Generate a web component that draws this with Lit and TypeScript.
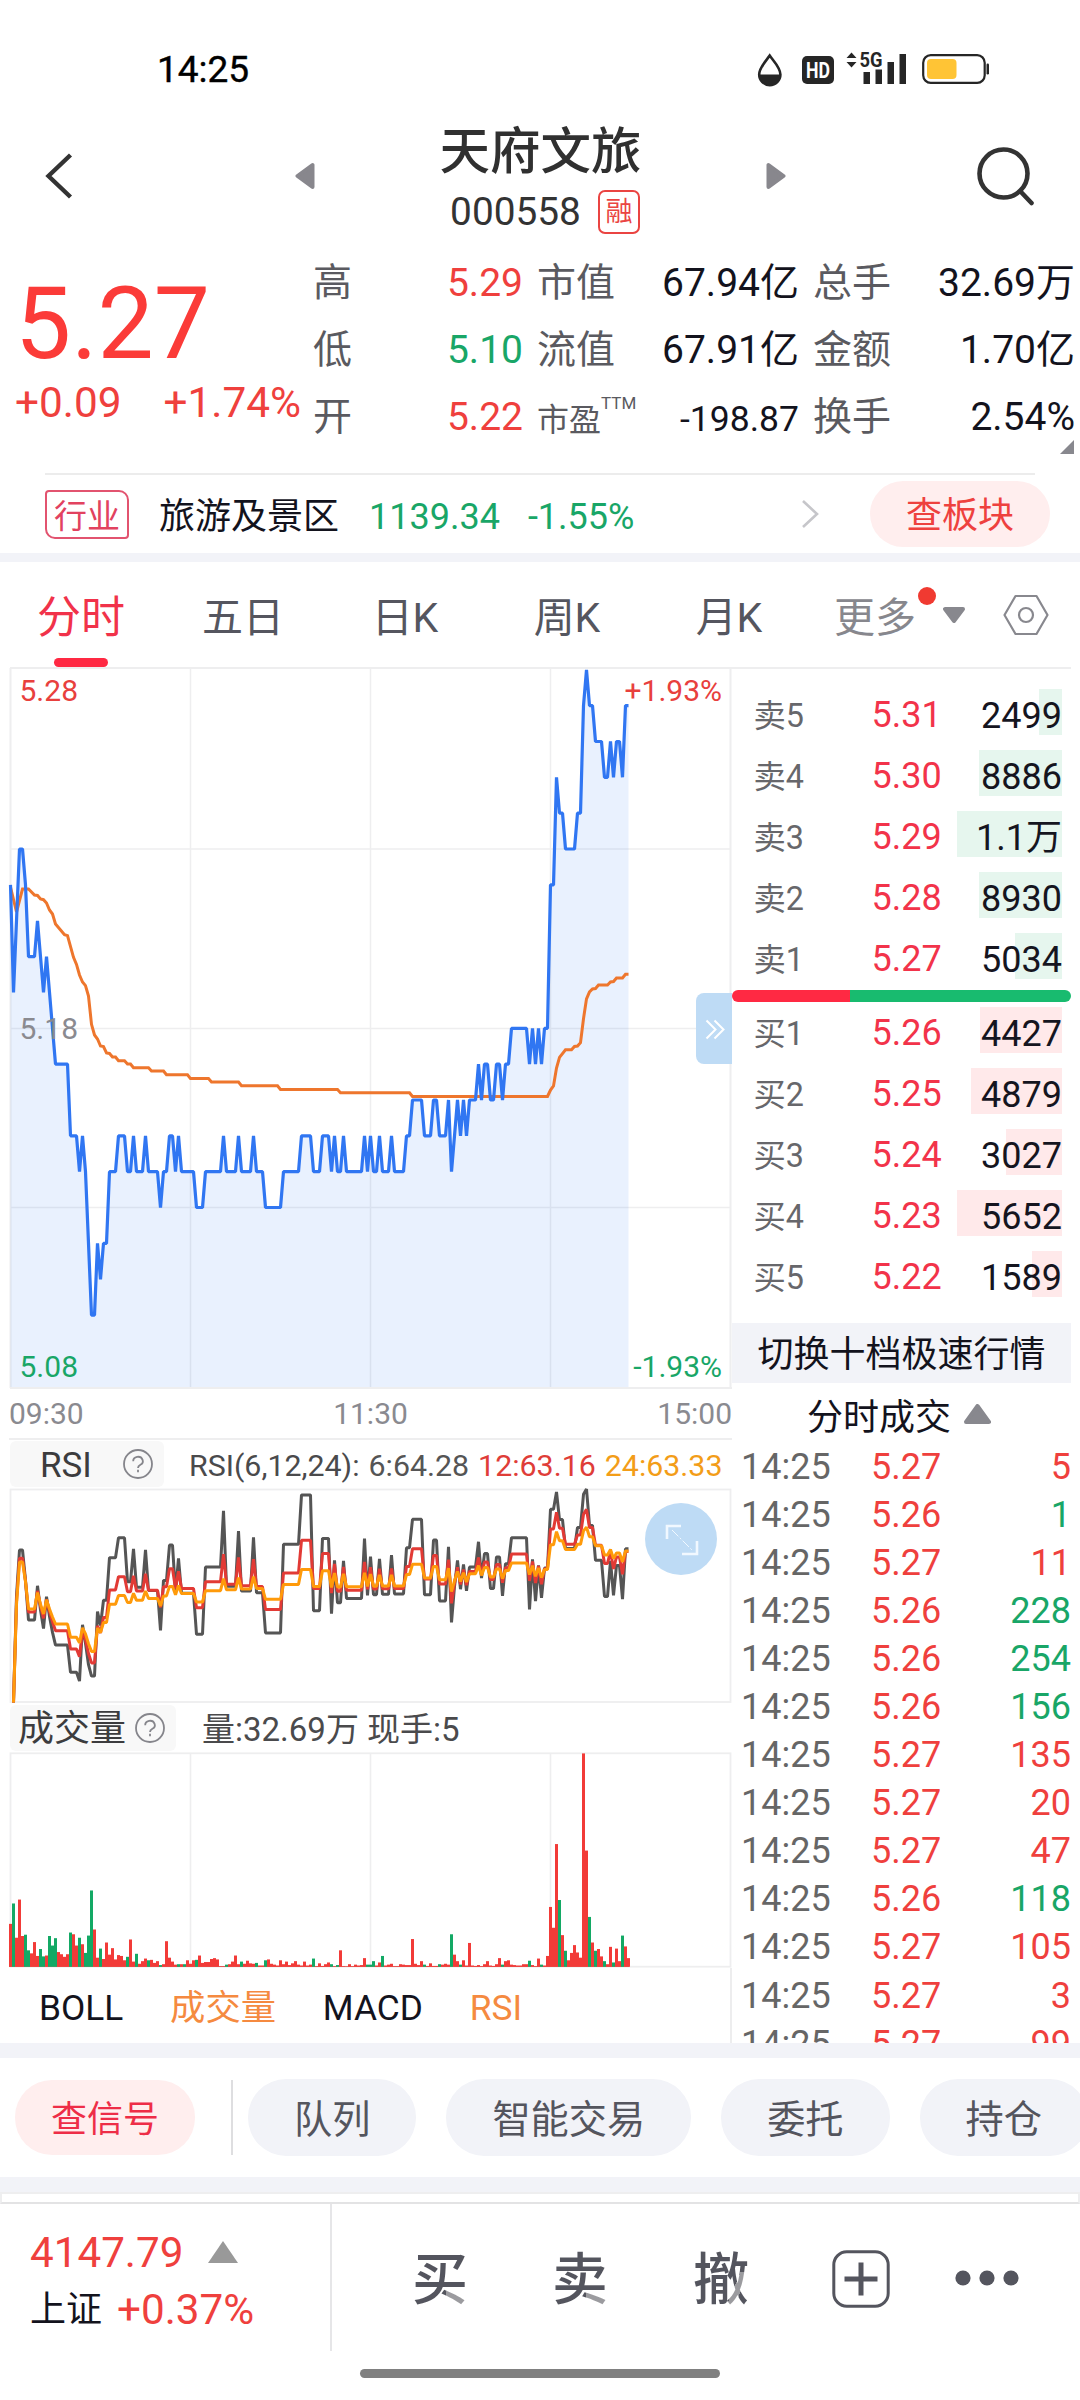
import { LitElement, html, svg, css } from "lit";
import { customElement, property } from "lit/decorators.js";
import { classMap } from "lit/directives/class-map.js";

const FONT = css`Roboto, "Noto Sans CJK SC", sans-serif`;

/* Minute prices as [ticks from previous close, minutes held]. */
const PRICE_RUNS: [number, number][] = [
  [4, 1], [1, 1], [3, 1], [5, 2], [4, 1], [2, 3], [3, 1], [2, 1], [1, 1], [2, 1], [1, 1], [0, 1], [-1, 5],
  [-3, 3], [-4, 1], [-3, 1], [-4, 1], [-6, 1], [-8, 2], [-6, 1], [-7, 1], [-6, 2], [-4, 3], [-3, 3], [-4, 2],
  [-3, 1], [-4, 3], [-3, 1], [-4, 4], [-5, 1], [-4, 2], [-3, 2], [-4, 1], [-3, 1], [-4, 5], [-5, 3], [-4, 6],
  [-3, 1], [-4, 4], [-3, 1], [-4, 4], [-3, 1], [-4, 3], [-5, 6], [-4, 6], [-3, 4], [-4, 3], [-3, 3], [-4, 1],
  [-3, 1], [-4, 2], [-3, 1], [-4, 6], [-3, 1], [-4, 1], [-3, 1], [-4, 2], [-3, 1], [-4, 3], [-3, 1], [-4, 4],
  [-3, 2], [-2, 4], [-3, 3], [-2, 2], [-3, 3], [-2, 1], [-4, 1], [-3, 1], [-2, 1], [-3, 1], [-2, 1], [-3, 1],
  [-2, 3], [-1, 1], [-2, 1], [-1, 2], [-2, 2], [-1, 2], [-2, 1], [-1, 2], [0, 6], [-1, 1], [0, 1], [-1, 1],
  [0, 1], [-1, 1], [0, 2], [4, 2], [7, 1], [6, 2], [5, 4], [6, 2], [9, 1], [10, 1], [9, 2], [8, 3], [7, 2],
  [8, 1], [7, 1], [8, 2], [7, 1], [9, 2],
];
const PRICES = PRICE_RUNS.flatMap(([v, n]) => Array<number>(n).fill(v));

/* Average price line as [minute, y]. */
const AVERAGE: [number, number][] = [
  [0, 887], [2, 912], [4, 889], [6, 889], [8, 895], [9, 895.5], [10, 899], [11, 899.7], [12, 903], [13, 910],
  [14, 914], [15, 924], [18, 934.6], [19, 935.6], [21, 957.3], [22, 964.4], [23, 975], [24, 982], [25, 985.6],
  [26, 996], [27, 1024.3], [28, 1035], [29, 1039], [30, 1046], [31, 1046.5], [32, 1053], [33, 1053.5],
  [34, 1057], [35, 1057], [36, 1060.7], [38, 1060.7], [39, 1064], [40, 1064], [41, 1067.7], [46, 1067.7],
  [47, 1071], [51, 1071], [52, 1074.8], [59, 1074.8], [60, 1078.6], [66, 1078.6], [67, 1082], [76, 1082],
  [77, 1085.7], [89, 1085.7], [90, 1089.4], [109, 1089.4], [110, 1092.7], [133, 1092.7], [134, 1096.5],
  [179, 1096.5], [180, 1090], [181, 1086], [182, 1068], [183, 1057.4], [185, 1049.8], [187, 1049.8],
  [188, 1046.5], [189, 1046], [190, 1042.7], [191, 1018.7], [192, 998.8], [193, 991.8], [194, 989],
  [195, 988.5], [196, 985], [199, 985], [200, 982], [201, 981.5], [202, 978], [204, 978], [205, 974.3],
  [206, 974.3],
];

/* Traded volume for each minute; a negative value is a falling minute. */
const VOLUMES = [
  99, -146, 67, 155, 71, -74, -38, 31, 57, 25, -41, -24, 26, -71, -49, -66, 34, 29, 23, 29,
  -79, 75, 49, -67, 52, -32, -72, -176, 86, 21, -42, 18, 56, 28, 43, 17, 27, 25, 15, -23,
  63, 12, -30, 7, 13, 19, -15, 16, 9, 13, -4, 6, 59, 21, 12, 5, -6, 6, -6, 15,
  7, 15, -16, 26, 9, 11, 11, 18, 20, 17, 1, 1, -5, 6, 12, 26, 6, -12, 7, 14,
  8, 7, -9, 3, 3, -15, 17, 7, 5, 3, 15, 6, 12, 4, 8, 13, 5, 3, 12, 3,
  5, -19, 1, 8, 2, 6, 10, -6, 1, -4, 38, 1, 0, 6, 1, 5, 3, 4, 20, -5,
  -5, -13, 3, 10, -25, 3, 5, 7, 1, 1, 6, 5, 4, 4, 64, 7, 4, 13, -5, 2,
  8, 2, 2, -6, 5, 7, 5, -75, 28, 13, -5, 15, 3, 55, 3, 2, 4, 1, 6, 13,
  3, 2, 6, 20, -5, 13, 15, 5, 4, 3, 3, 6, 6, -14, 4, 1, 19, -5, 3, 25,
  138, 90, 283, -154, 73, -37, 15, 32, 50, 33, 21, 492, 268, -115, 56, -37, 41, 24, -13, 6,
  46, -10, 42, 13, -72, 47, 20,
];

const xAt = (i: number) => 10.5 + i * 3;
const priceY = (v: number) => 1028.3 - v * 35.85;

function rsi(n: number): number[] {
  let up = 0;
  let all = 0;
  return PRICES.slice(1).map((p, i) => {
    const d = p - PRICES[i];
    up = (up * (n - 1) + Math.max(d, 0)) / n;
    all = (all * (n - 1) + Math.abs(d)) / n;
    return all ? (up / all) * 100 : 0;
  });
}

const RSI_LINES = [
  { values: rsi(6), color: "#555555" },
  { values: rsi(12), color: "#e23a35" },
  { values: rsi(24), color: "#ff9a0a" },
];
const RSI_TOP = Math.max(...RSI_LINES[0].values);

const join = (pts: [number, number][]) => pts.map(([x, y]) => `${x},${y.toFixed(1)}`).join(" ");

@customElement("help-mark")
class HelpMark extends LitElement {
  static styles = css`
    :host { display: block; width: 30px; height: 30px; }
    svg { display: block; }
  `;
  render() {
    return html`<svg width="30" height="30" viewBox="0 0 30 30" fill="none" stroke="#85858b" stroke-width="1.8">
      <circle cx="15" cy="15" r="14"></circle>
      <path d="M10.2 12.2a4.8 4.3 0 1 1 7.2 3.600c-1.8 1-2.4 1.6-2.4 3.200"></path>
      <path d="M15 20.8v2.4"></path>
    </svg>`;
  }
}

@customElement("price-chart")
class PriceChart extends LitElement {
  static styles = css`
    :host { display: block; position: relative; height: 722px; }
    svg { display: block; }
    text { font: 30px ${FONT}; }
    .more {
      position: absolute; right: 0; top: 326px; width: 36px; height: 71px;
      border-radius: 8px 0 0 8px; background: #bedbf5;
    }
  `;
  render() {
    const pts = PRICES.map((v, i) => [xAt(i), priceY(v)] as [number, number]);
    const last = xAt(PRICES.length - 1);
    return html`
      <svg width="732" height="722" viewBox="0 667 732 722">
        <g stroke="#eeeeef" stroke-width="2" fill="none">
          <path d="M10 668H732M10 1388H732M10.5 668V1388M730.5 668V1388"></path>
          <path d="M11 849H730M11 1028.5H730M11 1207.5H730M190.5 669V1388M370.5 669V1388M550.5 669V1388" stroke-width="1.5"></path>
        </g>
        <polygon points="10.5,1387 ${join(pts)} ${last},1387" fill="#2f7af5" fill-opacity=".105"></polygon>
        <polyline points=${join(AVERAGE.map(([i, y]) => [xAt(i), y]))} fill="none" stroke="#ee762d" stroke-width="3"></polyline>
        <polyline points=${join(pts)} fill="none" stroke="#3076f2" stroke-width="3.2" stroke-linejoin="bevel"></polyline>
        <text x="19.5" y="701" fill="#e8403d">5.28</text>
        <text x="19.5" y="1039" fill="#8a8a90">5.18</text>
        <text x="19.5" y="1376.5" fill="#19a667">5.08</text>
        <text x="722" y="701" text-anchor="end" fill="#e8403d">+1.93%</text>
        <text x="722" y="1376.5" text-anchor="end" fill="#19a667">-1.93%</text>
      </svg>
      <svg class="more" viewBox="0 0 36 71" fill="none" stroke="#ffffff" stroke-width="2">
        <path d="M10.5 27.5l9 9-9 9M18.5 27.5l9 9-9 9"></path>
      </svg>`;
  }
}

@customElement("rsi-chart")
class RsiChart extends LitElement {
  static styles = css`
    :host { display: block; position: relative; height: 215px; }
    svg { display: block; }
    .expand { position: absolute; left: 645px; top: 15px; }
  `;
  render() {
    return html`
      <svg width="732" height="215" viewBox="0 1488 732 215">
        <rect x="10.5" y="1489.5" width="720" height="212.5" fill="none" stroke="#eeeeef" stroke-width="1.8"></rect>
        ${RSI_LINES.map(
          (l) => svg`<polyline fill="none" stroke=${l.color} stroke-width="3" stroke-linejoin="bevel"
            points=${join(l.values.map((v, i) => [xAt(i + 1), 1702.5 - (v / RSI_TOP) * 213.5]))}></polyline>`,
        )}
      </svg>
      <svg class="expand" width="72" height="72" viewBox="0 0 72 72" fill="none" stroke="#f1f8ff" stroke-width="2.6">
        <circle cx="36" cy="36" r="36" fill="#bedbf5" stroke="none"></circle>
        <path d="M22 36V23H36M52 38V51H37"></path>
        <path d="M27 27L47 47" stroke-width="1" stroke-dasharray="9 2 2 2"></path>
      </svg>`;
  }
}

@customElement("volume-chart")
class VolumeChart extends LitElement {
  static styles = css`
    :host { display: block; height: 216px; }
    svg { display: block; }
  `;
  render() {
    return html`
      <svg width="732" height="216" viewBox="0 1752 732 216">
        <rect x="10.5" y="1753.3" width="720" height="213.4" fill="none" stroke="#eeeeef" stroke-width="1.8"></rect>
        <path d="M190.5 1753V1966M370.5 1753V1966M550.5 1753V1966" stroke="#eeeeef" stroke-width="1.6"></path>
        <path d="M9 1966.5H629" stroke="#d9706e" stroke-width="1"></path>
        ${VOLUMES.map((v, i) => {
          const h = Math.abs(v) * 0.4337;
          return svg`<rect x=${9 + i * 3} y=${1966.8 - h} width="3" height=${h} fill=${v < 0 ? "#13a965" : "#f23b38"}></rect>`;
        })}
      </svg>`;
  }
}

interface Level { name: string; price: string; qty: string; bar: number; }

@customElement("order-level")
class OrderLevel extends LitElement {
  @property({ attribute: false }) level!: Level;
  @property({ type: Boolean }) buy = false;
  static styles = css`
    :host { display: flex; height: 61px; box-sizing: border-box; padding-left: 21.5px; align-items: center; font: 36px/46px ${FONT}; }
    .name { width: 118px; padding-top: 8px; font-size: 32.3px; color: #67676b; }
    .price { padding-top: 7px; color: #f2334a; }
    .qty { position: relative; margin-left: auto; margin-right: 9px; width: 105px; height: 46px; }
    .bar { position: absolute; right: 0; top: 0; height: 46px; background: #e6f6ee; }
    .bar.buy { background: #ffe9ea; }
    .num { position: relative; padding-top: 4px; text-align: right; color: #15151f; white-space: nowrap; }
  `;
  render() {
    const l = this.level;
    return html`<span class="name">${l.name}</span><span class="price">${l.price}</span>
      <div class="qty">
        <div class=${classMap({ bar: true, buy: this.buy })} style="width:${l.bar}px"></div>
        <div class="num">${l.qty}</div>
      </div>`;
  }
}

const SELLS: Level[] = [
  { name: "卖5", price: "5.31", qty: "2499", bar: 23 },
  { name: "卖4", price: "5.30", qty: "8886", bar: 83 },
  { name: "卖3", price: "5.29", qty: "1.1万", bar: 105 },
  { name: "卖2", price: "5.28", qty: "8930", bar: 83 },
  { name: "卖1", price: "5.27", qty: "5034", bar: 47 },
];
const BUYS: Level[] = [
  { name: "买1", price: "5.26", qty: "4427", bar: 82 },
  { name: "买2", price: "5.25", qty: "4879", bar: 91 },
  { name: "买3", price: "5.24", qty: "3027", bar: 56 },
  { name: "买4", price: "5.23", qty: "5652", bar: 105 },
  { name: "买5", price: "5.22", qty: "1589", bar: 30 },
];
const TRADES: [string, number, boolean][] = [
  ["5.27", 5, true], ["5.26", 1, false], ["5.27", 11, true], ["5.26", 228, false], ["5.26", 254, false],
  ["5.26", 156, false], ["5.27", 135, true], ["5.27", 20, true], ["5.27", 47, true], ["5.26", 118, false],
  ["5.27", 105, true], ["5.27", 3, true], ["5.27", 99, true],
];

@customElement("app-root")
class AppRoot extends LitElement {
  static styles = css`
    :host { display: block; width: 1080px; height: 2400px; overflow: hidden; background: #fff; font-family: ${FONT}; color: #13131d; }
    svg { display: block; flex: none; }
    .red { color: #ef403d; }
    .green { color: #19a667; }

    .status { display: flex; align-items: center; height: 120px; box-sizing: border-box; padding: 20px 90px 0 157px; }
    .clock { flex: 1; font-size: 37px; font-weight: 400; line-height: 50px; color: #000; -webkit-text-stroke: .4px #000; }
    .status svg { overflow: visible; }
    .status svg text { font-family: ${FONT}; font-weight: 700; }

    .header { display: flex; align-items: center; height: 112px; padding: 0 44px 0 45px; }
    .prev { margin-left: 222px; }
    .names { flex: 1; height: 112px; text-align: center; }
    .title { padding-top: 2px; font-size: 50.5px; font-weight: 500; line-height: 60px; color: #303030; }
    .code { display: flex; justify-content: center; align-items: center; gap: 17px; margin-top: 8px; padding-left: 9px; font-size: 38.8px; line-height: 44px; color: #333; }
    .margin-tag { width: 38px; height: 40px; border: 2px solid #ea4442; border-radius: 7px; font-size: 27px; line-height: 41px; color: #ea4442; }
    .next { margin-right: 190px; }

    .quote { position: relative; display: flex; height: 241px; box-sizing: border-box; padding-top: 17px; }
    .now { width: 312px; box-sizing: border-box; padding: 20px 0 0 15px; }
    .last { font-size: 100px; line-height: 110px; color: #fb3b38; }
    .change { display: flex; gap: 42px; margin-top: -1px; font-size: 42.3px; line-height: 50px; }
    .stats { display: grid; grid-template-columns: 210px 262px 262px; grid-auto-rows: 67px; column-gap: 14px; padding-left: 1px; font-size: 39px; line-height: 68px; white-space: nowrap; }
    .cell { display: flex; justify-content: space-between; }
    .label { color: #5a5a60; }
    .label.pe { display: flex; font-size: 32px; padding-top: 3px; }
    .ttm { font-size: 17px; line-height: 20px; margin-top: 7px; }
    .pe-value { font-size: 35.500px; padding-top: 2px; }
    .corner { position: absolute; right: 6px; bottom: 19px; }

    .rule { height: 2px; margin: 0 45px; background: #ececec; }
    .sector { display: flex; align-items: center; height: 78px; margin: 0 30px 0 45px; font-size: 36px; line-height: 50px; }
    .sector-tag { width: 80px; height: 45px; border: 2px solid #e2536f; border-radius: 4px 10px 4px 10px; font-size: 33px; line-height: 49px; text-align: center; color: #e2425f; }
    .sector-name { margin-left: 30px; padding-top: 6px; }
    .sector-index { margin-left: 30px; padding-top: 5px; }
    .sector-pct { margin-left: 28px; padding-top: 5px; }
    .go { margin-left: auto; margin-right: 51px; }
    .pill { width: 180px; height: 66px; border-radius: 33px; background: #ffeeee; text-align: center; line-height: 71px; color: #ee413e; }
    .band { height: 9px; background: #f2f3f8; }

    .tabs { display: flex; align-items: center; height: 105px; font-size: 41px; color: #55565f; }
    .tab { width: 162px; text-align: center; line-height: 60px; padding-top: 6px; }
    .tab.on { position: relative; font-size: 44px; color: #f1324a; }
    .tab.on::after { content: ""; position: absolute; left: 54px; bottom: -19px; width: 54px; height: 9px; border-radius: 5px; background: #ff2943; }
    .more { position: relative; margin-left: 24px; padding-top: 6px; font-size: 41px; line-height: 60px; color: #87878d; }
    .dot { position: absolute; left: 84px; top: 5px; width: 18px; height: 18px; border-radius: 9px; background: #f03a31; }
    .drop { margin-left: 27px; }
    .settings { margin-left: 38px; }

    .main { display: flex; height: 1376px; overflow: hidden; }
    .left { width: 732px; }
    .axis { display: flex; justify-content: space-between; height: 49px; box-sizing: border-box; padding: 0 0 0 9px; font-size: 30px; line-height: 49px; color: #8a8a90; }
    .line { height: 2px; margin-left: 9px; background: #eeeeef; }
    .head { display: flex; align-items: center; height: 48px; padding-left: 10px; white-space: nowrap; }
    .head.vol { height: 49px; }
    .picker { display: flex; align-items: center; box-sizing: border-box; height: 46px; width: 154px; padding-left: 30px; border-radius: 6px; background: #f8f8f8; font-size: 35px; line-height: 46px; color: #3c3c3e; }
    .picker-name { padding-top: 3px; }
    .vol .picker { width: 166px; padding-left: 8px; font-size: 36px; }
    .picker help-mark { margin-left: auto; margin-right: 11px; }
    .values { display: flex; gap: 9px; margin-left: 25px; padding-top: 3px; font-size: 30.35px; line-height: 46px; color: #4a4a4c; }
    .vol .values { margin-left: 26px; padding-top: 5px; gap: 8px; font-size: 33px; }
    .gray { color: #555; }
    .crimson { color: #df3d38; }
    .amber { color: #f39d18; }
    .picks { display: flex; height: 75px; box-sizing: border-box; padding-left: 39px; border-right: 2px solid #ededee; font-size: 35.3px; line-height: 81px; }
    .pick { margin-right: 46.8px; }
    .orange { color: #f58a40; }

    .right { width: 339px; border-top: 2px solid #eeeeef; box-sizing: border-box; padding-top: 12px; }
    .ratio { height: 12px; margin: 4px 0 -3px; border-radius: 6px; background: linear-gradient(to right, #ff2943 118px, #18bb6f 118px); }
    .switch { height: 60px; margin-top: 19px; background: #f2f3f8; font-size: 36px; line-height: 65px; text-align: center; }
    .trades-head { display: flex; align-items: center; height: 59px; box-sizing: border-box; padding: 3px 0 0 75px; font-size: 36px; gap: 13px; }
    .trade { display: flex; height: 48.05px; font-size: 36px; line-height: 51px; }
    .time { width: 130px; padding-left: 9px; color: #666; }
    .amount { margin-left: auto; }

    .thick { height: 15px; background: #f2f3f8; }
    .chips { display: flex; align-items: center; height: 119px; padding-left: 15px; overflow: hidden; white-space: nowrap; }
    .signal { flex: none; width: 180px; height: 75px; border-radius: 37px; background: #ffeeee; text-align: center; font-size: 36px; line-height: 80px; color: #ee2d47; }
    .split { flex: none; width: 2px; height: 75px; margin: 0 15px 0 36px; background: #dedee0; }
    .chip { flex: none; height: 77px; padding: 0 46px; margin-right: 30px; border-radius: 38px; background: #f2f3f8; font-size: 38.2px; line-height: 83px; color: #54555e; }
    .news { height: 12px; box-sizing: border-box; border: 2px solid #eeeeef; border-bottom-color: #e3e3e4; }

    .footer { display: flex; height: 165px; }
    .index { width: 332px; height: 147px; box-sizing: border-box; padding: 21px 0 0 30px; border-right: 2px solid #e6e6e8; font-size: 42.2px; line-height: 55px; }
    .index-row { display: flex; align-items: center; gap: 25px; }
    .index-row svg { margin-top: -2px; }
    .index-row.low { gap: 15px; }
    .index-name { font-size: 36px; padding-top: 3px; }
    .actions { flex: 1; display: flex; height: 147px; }
    .act { width: 56px; height: 70px; margin-top: 41px; font-size: 56px; font-weight: 500; line-height: 70px; color: transparent; -webkit-background-clip: text; background-clip: text; background-color: #54555e; background-repeat: no-repeat; background-image: linear-gradient(#9b9b9f, #9b9b9f); background-size: 25px 16px; background-position: 34px 46px; }
    .act.buy { margin-left: 80px; }
    .act.sell { margin-left: 84px; }
    .act.cancel { margin-left: 85px; background-image: linear-gradient(113deg, transparent 38%, #9b9b9f 38%, #9b9b9f 63%, transparent 63%); background-size: 18px 36px; background-position: 35px 27px; }
    .plus { margin: 46px 0 0 83px; }
    .dots { margin: 66px 0 0 65px; }
    .home { width: 360px; height: 9px; margin: 0 auto; border-radius: 5px; background: #808080; }
  `;

  private triangle(up: boolean, color: string, w: number, h: number) {
    const d = up ? `M${w / 2} 2L${w - 2} ${h - 2}H2Z` : `M2 2H${w - 2}L${w / 2} ${h - 2}Z`;
    return html`<svg width=${w} height=${h}><path d=${d} fill=${color} stroke=${color} stroke-width="4" stroke-linejoin="round"></path></svg>`;
  }

  private cell(label: unknown, value: string, tone = "") {
    return html`<div class="cell"><span class="label">${label}</span><span class=${tone}>${value}</span></div>`;
  }

  render() {
    return html`
      <div class="status">
        <div class="clock">14:25</div>
        <svg width="236" height="40" viewBox="0 0 236 40">
          <path d="M15.7 5.6C12 11 5.2 17.5 5.2 24.6a10.6 10.6 0 0 0 21.2 0C26.4 17.5 19.4 11 15.7 5.6Z" fill="none" stroke="#262626" stroke-width="2.6"></path>
          <path d="M4.5 24.5H27A11.3 11.3 0 0 1 4.5 24.5Z" fill="#262626"></path>
          <rect x="48" y="6" width="32" height="28" rx="5" fill="#262626"></rect>
          <text x="64" y="28" font-size="22" fill="#fff" text-anchor="middle" textLength="24" lengthAdjust="spacingAndGlyphs">HD</text>
          <path d="M97.5 2.5l5 5.5h-10zM97.5 17.500l5-5.500h-10z" fill="#262626"></path>
          <text x="105.500" y="16.500" font-size="21" fill="#262626" textLength="23" lengthAdjust="spacingAndGlyphs">5G</text>
          <path d="M109.500 22h6.500v12h-6.500zM121.500 19.500h6.500V34h-6.500zM133.500 12h6.500v22h-6.500zM145.500 4h6.500v30h-6.500z" fill="#262626"></path>
          <rect x="169.200" y="5.200" width="61.500" height="27.600" rx="7.500" fill="none" stroke="#262626" stroke-width="2.200"></rect>
          <rect x="173" y="9" width="29.500" height="20" rx="4" fill="#ffc435"></rect>
          <rect x="232.500" y="13.500" width="2.500" height="11" rx="1.200" fill="#262626"></rect>
        </svg>
      </div>

      <div class="header">
        <svg width="28" height="46" viewBox="0 0 28 46" fill="none" stroke="#333" stroke-width="4.400"><path d="M25.500 2L3.500 23l22 21"></path></svg>
        <svg class="prev" width="20" height="28" viewBox="0 0 20 28"><path d="M2.500 14L17.500 3V25Z" fill="#88878d" stroke="#88878d" stroke-width="4" stroke-linejoin="round"></path></svg>
        <div class="names">
          <div class="title">天府文旅</div>
          <div class="code"><span>000558</span><span class="margin-tag">融</span></div>
        </div>
        <svg class="next" width="20" height="28" viewBox="0 0 20 28"><path d="M17.500 14L2.500 3V25Z" fill="#88878d" stroke="#88878d" stroke-width="4" stroke-linejoin="round"></path></svg>
        <svg width="60" height="60" viewBox="0 0 60 60" fill="none" stroke="#333" stroke-width="4.600" stroke-linecap="round"><circle cx="27.500" cy="27.500" r="24"></circle><path d="M45.500 46.500L55.500 57"></path></svg>
      </div>

      <div class="quote">
        <div class="now">
          <div class="last">5.27</div>
          <div class="change red"><span>+0.09</span><span>+1.74%</span></div>
        </div>
        <div class="stats">
          ${this.cell("高", "5.29", "red")}${this.cell("市值", "67.94亿")}${this.cell("总手", "32.69万")}
          ${this.cell("低", "5.10", "green")}${this.cell("流值", "67.91亿")}${this.cell("金额", "1.70亿")}
          ${this.cell("开", "5.22", "red")}
          <div class="cell"><span class="label pe">市盈<span class="ttm">TTM</span></span><span class="pe-value">-198.87</span></div>
          ${this.cell("换手", "2.54%")}
        </div>
        <svg class="corner" width="14" height="14"><path d="M14 0V14H0Z" fill="#88888e"></path></svg>
      </div>

      <div class="rule"></div>
      <div class="sector">
        <div class="sector-tag">行业</div>
        <div class="sector-name">旅游及景区</div>
        <div class="sector-index green">1139.34</div>
        <div class="sector-pct green">-1.55%</div>
        <svg class="go" width="18" height="30" viewBox="0 0 18 30" fill="none" stroke="#c6c6ca" stroke-width="2.600"><path d="M2 2l14 13L2 28"></path></svg>
        <div class="pill">查板块</div>
      </div>
      <div class="band"></div>

      <div class="tabs">
        <div class="tab on">分时</div><div class="tab">五日</div><div class="tab">日K</div><div class="tab">周K</div><div class="tab">月K</div>
        <div class="more">更多<span class="dot"></span></div>
        <div class="drop">${this.triangle(false, "#88888e", 22, 16)}</div>
        <svg class="settings" width="46" height="42" viewBox="0 0 46 42" fill="none" stroke="#88888e" stroke-width="2.200" stroke-linejoin="round"><path d="M12.500 2H33.500L44.500 21L33.500 40H12.500L1.500 21Z"></path><circle cx="23" cy="21" r="7"></circle></svg>
      </div>

      <div class="main">
        <div class="left">
          <price-chart></price-chart>
          <div class="axis"><span>09:30</span><span>11:30</span><span>15:00</span></div>
          <div class="line"></div>
          <div class="head">
            <div class="picker"><span class="picker-name">RSI</span><help-mark></help-mark></div>
            <div class="values"><span>RSI(6,12,24):</span><span class="gray">6:64.28</span><span class="crimson">12:63.16</span><span class="amber">24:63.33</span></div>
          </div>
          <rsi-chart></rsi-chart>
          <div class="head vol">
            <div class="picker"><span class="picker-name">成交量</span><help-mark></help-mark></div>
            <div class="values"><span>量:32.69万</span><span>现手:5</span></div>
          </div>
          <volume-chart></volume-chart>
          <div class="picks"><span class="pick">BOLL</span><span class="pick orange">成交量</span><span class="pick">MACD</span><span class="pick orange">RSI</span></div>
        </div>
        <div class="right">
          ${SELLS.map((l) => html`<order-level .level=${l}></order-level>`)}
          <div class="ratio"></div>
          ${BUYS.map((l) => html`<order-level .level=${l} buy></order-level>`)}
          <div class="switch">切换十档极速行情</div>
          <div class="trades-head">分时成交${this.triangle(true, "#88888e", 27, 20)}</div>
          ${TRADES.map(
            ([p, n, up]) => html`<div class="trade"><span class="time">14:25</span><span class="red">${p}</span><span class="amount ${up ? "red" : "green"}">${n}</span></div>`,
          )}
        </div>
      </div>

      <div class="thick"></div>
      <div class="chips">
        <div class="signal">查信号</div>
        <div class="split"></div>
        ${["队列", "智能交易", "委托", "持仓"].map((t) => html`<div class="chip">${t}</div>`)}
      </div>
      <div class="thick"></div>
      <div class="news"></div>

      <div class="footer">
        <div class="index">
          <div class="index-row red">4147.79<svg width="30" height="22"><path d="M15 0L30 22H0Z" fill="#999"></path></svg></div>
          <div class="index-row low"><span class="index-name">上证</span><span class="red">+0.37%</span></div>
        </div>
        <div class="actions">
          <div class="act buy">买</div><div class="act sell">卖</div><div class="act cancel">撤</div>
          <svg class="plus" width="58" height="58" viewBox="0 0 58 58" fill="none" stroke="#54555e"><rect x="1.800" y="1.800" width="54.400" height="54.400" rx="13" stroke-width="3"></rect><path d="M29 12.500V45.500M12.500 29H45.500" stroke-width="5"></path></svg>
          <svg class="dots" width="66" height="16" viewBox="0 0 66 16" fill="#54555e"><circle cx="8" cy="8" r="7.600"></circle><circle cx="32" cy="8" r="7.600"></circle><circle cx="56" cy="8" r="7.600"></circle></svg>
        </div>
      </div>
      <div class="home"></div>
    `;
  }
}
